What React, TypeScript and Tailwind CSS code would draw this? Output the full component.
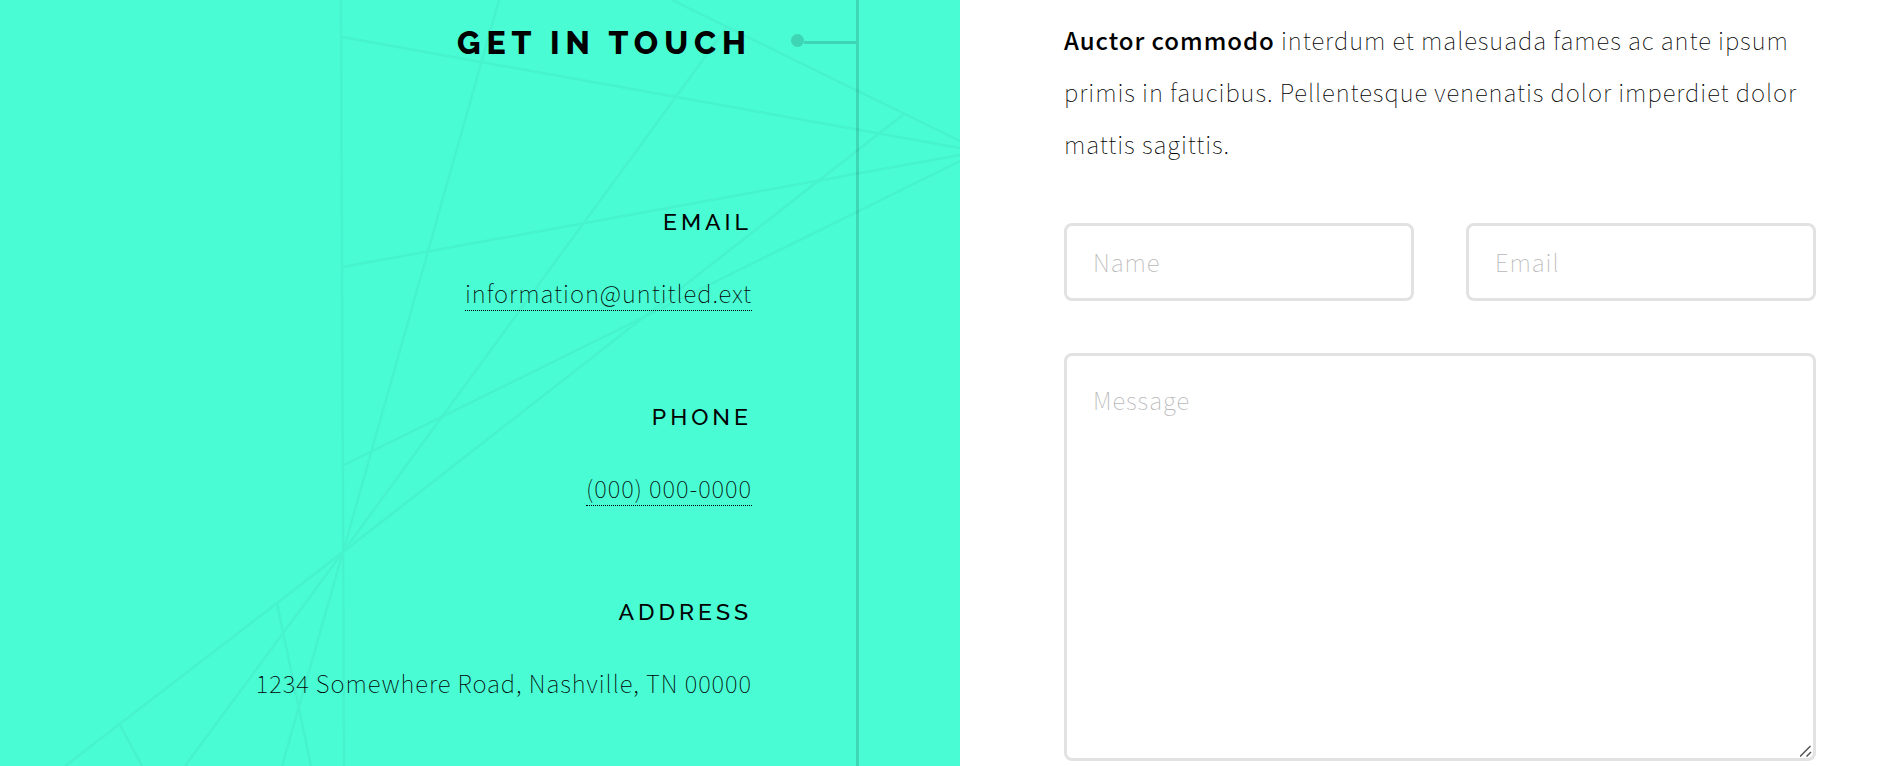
import React from "react";

const body = "font-['Noto_Sans_CJK_JP','Source_Sans_Pro',sans-serif] text-[24px] font-thin leading-[52px] tracking-[0.04em]";
const field =
  "block w-full rounded-lg border-3 border-[#e2e2e2] bg-transparent px-[26px] text-black outline-none placeholder:text-[#b8b8b8] focus:border-[#49fcd4]";

const webLines: [number, number, number, number][] = [
  [341, 0, 344, 766],
  [342, 37, 960, 148],
  [342, 267, 960, 155],
  [342, 466, 960, 161],
  [672, 0, 960, 141],
  [65, 766, 277, 603],
  [277, 603, 343, 552],
  [343, 552, 904, 114],
  [185, 766, 343, 552],
  [343, 552, 727, 27],
  [282, 766, 343, 552],
  [343, 552, 499, 0],
  [277, 603, 311, 766],
  [120, 725, 142, 766],
];

function Web() {
  return (
    <svg
      aria-hidden="true"
      className="pointer-events-none absolute top-0 right-0 h-[766px] w-[960px] opacity-3"
      viewBox="0 0 960 766"
      stroke="#000"
      strokeWidth="2.4"
    >
      {webLines.map(([x1, y1, x2, y2], i) => (
        <line key={i} x1={x1} y1={y1} x2={x2} y2={y2} />
      ))}
    </svg>
  );
}

function Detail({ title, children }: { title: string; children: React.ReactNode }) {
  return (
    <section className="flex flex-col gap-[26px]">
      <h3 className="font-[Raleway,Lato,sans-serif] text-[23px] leading-[39px] font-medium tracking-[4px] uppercase">
        {title}
      </h3>
      <p className={body}>{children}</p>
    </section>
  );
}

function DottedLink({ href, children }: { href: string; children: React.ReactNode }) {
  return (
    <a href={href} className="inline-block border-b border-dotted border-black leading-[34px]">
      {children}
    </a>
  );
}

export default function App() {
  return (
    <main className="grid min-h-screen grid-cols-[960fr_925fr] bg-white text-black">
      <div className="relative flex overflow-hidden bg-[#49fcd4] pr-[101px]">
        <Web />
        <div className="relative flex flex-1 justify-end border-r-3 border-black/15">
          <div className="flex flex-col pt-[17px] pr-[39px] text-right">
            <h2 className="font-[Raleway,Lato,sans-serif] text-[32px] leading-[52px] font-extrabold tracking-[6px] uppercase">
              Get in touch
            </h2>
            <div className="mt-[133px] flex flex-col gap-[78px]">
              <Detail title="Email">
                <DottedLink href="mailto:information@untitled.ext">information@untitled.ext</DottedLink>
              </Detail>
              <Detail title="Phone">
                <DottedLink href="tel:0000000000">(000) 000-0000</DottedLink>
              </Detail>
              <Detail title="Address">1234 Somewhere Road, Nashville, TN 00000</Detail>
            </div>
          </div>
          <div aria-hidden="true" className="mt-[34px] flex h-[13px] items-center opacity-15">
            <span className="size-[13px] rounded-full bg-black" />
            <span className="mt-1 h-[3px] w-[52px] bg-black" />
          </div>
        </div>
      </div>

      <div className="pt-[14px] pr-[69px] pl-[104px]">
        <p className={body}>
          <strong className="font-medium">Auctor commodo</strong> interdum et malesuada fames ac ante ipsum primis in
          faucibus. Pellentesque venenatis dolor imperdiet dolor mattis sagittis.
        </p>
        <form className={`mt-[53px] grid grid-cols-2 gap-[52px] ${body}`}>
          <input aria-label="Name" type="text" name="name" placeholder="Name" className={`h-[78px] pb-0.5 ${field}`} />
          <input aria-label="Email" type="email" name="email" placeholder="Email" className={`h-[78px] pb-0.5 ${field}`} />
          <div className="relative col-span-2">
            <textarea
              aria-label="Message"
              name="message"
              placeholder="Message"
              className={`h-[408px] resize-y py-[18px] [&::-webkit-resizer]:hidden ${field}`}
            />
            <svg
              aria-hidden="true"
              className="pointer-events-none absolute right-1 bottom-1 size-3"
              viewBox="0 0 12 12"
              stroke="#555"
              strokeWidth="1.5"
            >
              <path d="M0 11.5 10.5 1M6.5 11.5 11 7" />
            </svg>
          </div>
        </form>
      </div>
    </main>
  );
}
